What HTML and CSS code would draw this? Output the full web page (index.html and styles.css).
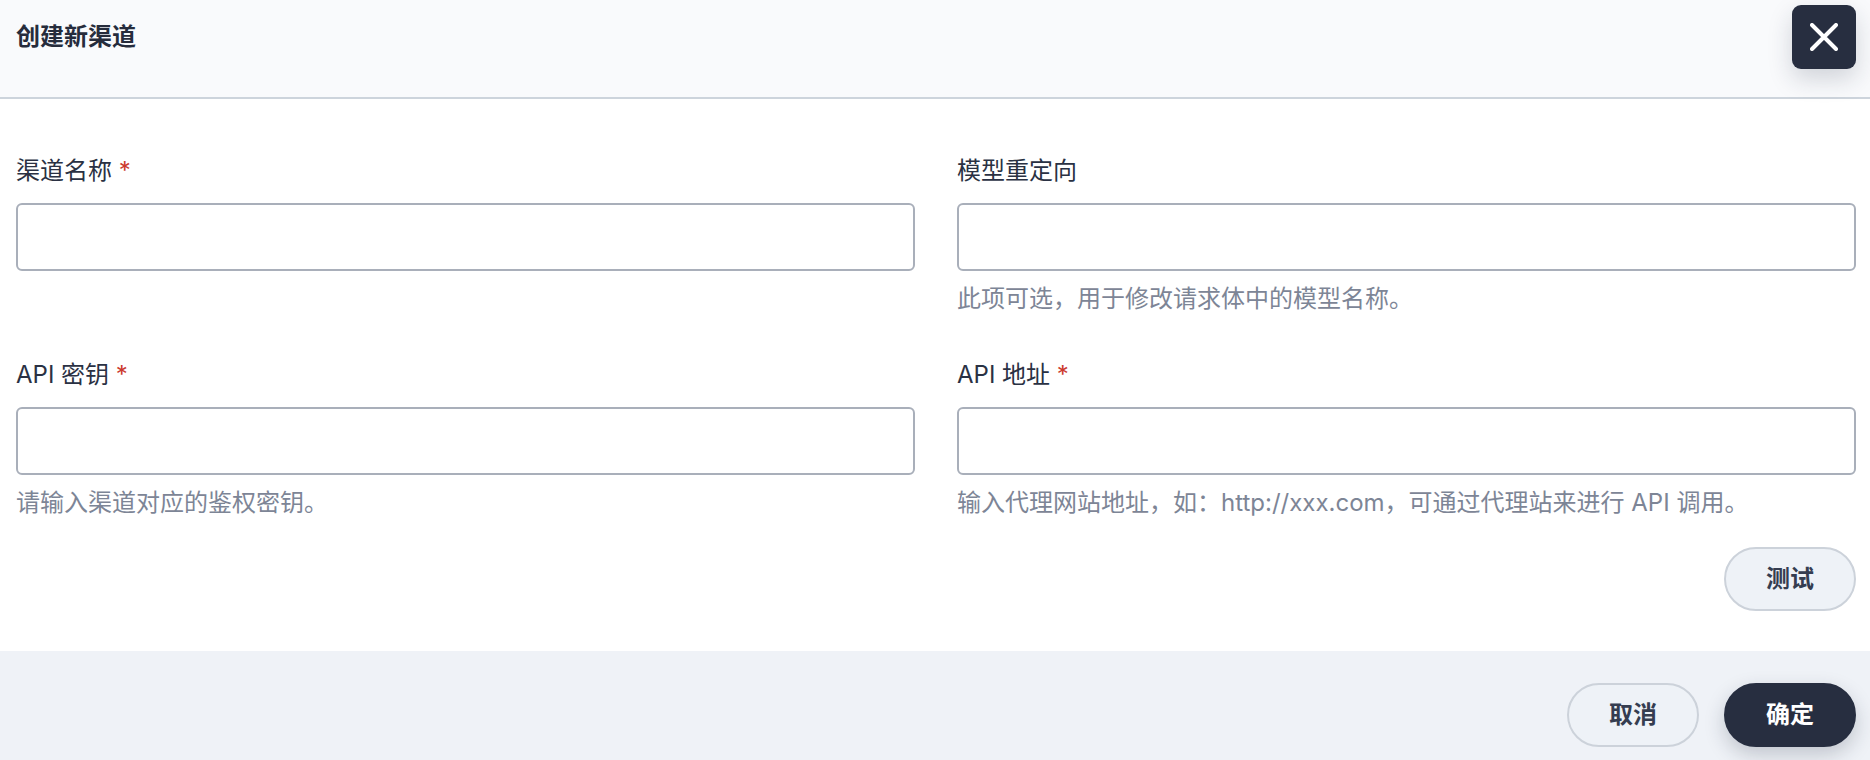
FILE: index.html
```html
<!DOCTYPE html>
<html lang="zh-CN">
<head>
<meta charset="utf-8">
<title>创建新渠道</title>
<link rel="stylesheet" href="styles.css">
</head>
<body>
<div class="dialog">
  <header class="dlg-header">
    <h1 class="dlg-title">创建新渠道</h1>
    <button class="close-btn" aria-label="关闭">
      <svg width="28" height="28" viewBox="0 0 28 28" fill="none" stroke="#ffffff" stroke-width="4" stroke-linecap="round">
        <path d="M2 2 L26 26 M26 2 L2 26"/>
      </svg>
    </button>
  </header>
  <main class="dlg-body">
    <div class="grid">
      <div class="field">
        <label class="label">渠道名称 <span class="req">*</span></label>
        <input class="input" type="text">
      </div>
      <div class="field">
        <label class="label">模型重定向</label>
        <input class="input" type="text">
        <div class="help">此项可选，用于修改请求体中的模型名称。</div>
      </div>
      <div class="field">
        <label class="label">API 密钥 <span class="req">*</span></label>
        <input class="input" type="text">
        <div class="help">请输入渠道对应的鉴权密钥。</div>
      </div>
      <div class="field">
        <label class="label">API 地址 <span class="req">*</span></label>
        <input class="input" type="text">
        <div class="help">输入代理网站地址，如：http://xxx.com，可通过代理站来进行 API 调用。</div>
      </div>
    </div>
    <div class="test-row">
      <button class="btn btn-light">测试</button>
    </div>
  </main>
  <footer class="dlg-footer">
    <button class="btn btn-light">取消</button>
    <button class="btn btn-dark">确定</button>
  </footer>
</div>
</body>
</html>
```
FILE: styles.css
```css
* { box-sizing: border-box; }
html, body { margin: 0; padding: 0; background: #ffffff; }
body {
  font-family: Inter, "Noto Sans CJK SC", sans-serif;
  font-size: 24px;
  line-height: 36px;
  color: #2a3143;
  width: 1870px;
  height: 760px;
  overflow: hidden;
}
.dialog { display: flex; flex-direction: column; }
.dlg-header {
  height: 99px;
  background: #f9fafc;
  border-bottom: 2px solid #cdd4dc;
  display: flex;
  justify-content: space-between;
  align-items: flex-start;
  padding: 0 14px 0 16px;
}
.dlg-title {
  margin: 19px 0 0 0;
  font-size: 24px;
  line-height: 36px;
  font-weight: 700;
  color: #262c3c;
}
.close-btn {
  margin-top: 5px;
  width: 64px;
  height: 64px;
  border: none;
  border-radius: 9px;
  background: #272e40;
  display: flex;
  align-items: center;
  justify-content: center;
  padding: 0;
  box-shadow: 0 10px 24px rgba(30, 40, 60, 0.18);
}
.dlg-body {
  padding: 54px 14px 40px 16px;
}
.grid {
  display: grid;
  grid-template-columns: 1fr 1fr;
  column-gap: 42px;
  row-gap: 40px;
}
.field { display: flex; flex-direction: column; }
.label {
  display: block;
  font-size: 24px;
  line-height: 36px;
  color: #2a3143;
  margin-bottom: 14px;
}
.req { color: #cc3a2e; }
.input {
  height: 68px;
  width: 100%;
  border: 2px solid #a9afba;
  border-radius: 6px;
  background: #ffffff;
  font: inherit;
  padding: 0 16px;
  outline: none;
}
.help {
  margin-top: 10px;
  font-size: 24px;
  line-height: 36px;
  color: #7d8596;
}
.test-row {
  display: flex;
  justify-content: flex-end;
  margin-top: 26px;
}
.btn {
  height: 64px;
  padding: 0 40px;
  border-radius: 32px;
  font-family: inherit;
  font-size: 24px;
  font-weight: 700;
  line-height: 1;
  cursor: pointer;
}
.btn-light {
  background: #eef2f7;
  border: 2px solid #ccd2da;
  color: #353d50;
}
.btn-dark {
  background: #272e40;
  border: 2px solid #272e40;
  color: #ffffff;
  box-shadow: 0 8px 20px rgba(30, 40, 60, 0.22);
}
.dlg-footer {
  flex: 1;
  background: #eff2f7;
  display: flex;
  justify-content: flex-end;
  gap: 25px;
  padding: 32px 14px 32px 16px;
  min-height: 109px;
}
```
